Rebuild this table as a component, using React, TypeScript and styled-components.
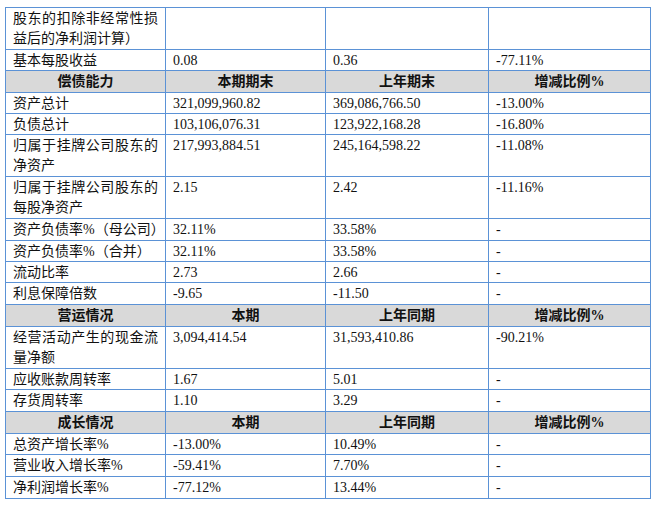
import React from "react";
import styled, { createGlobalStyle } from "styled-components";

const Global = createGlobalStyle`
  html, body { margin: 0; padding: 0; background: #ffffff; }
  body { font-family: "Liberation Serif", "Noto Sans CJK SC", serif; }
`;

const Page = styled.div`
  padding: 7px 0 0 5px;
`;

const Table = styled.div`
  width: 646px;
  border-top: 1px solid #5b92d6;
  border-left: 1px solid #5b92d6;
  box-sizing: border-box;
  font-family: "Liberation Serif", "Noto Sans CJK SC", serif;
  font-size: 14px;
  color: #111111;
`;

const Row = styled.div<{ $h: number; $head?: boolean }>`
  display: grid;
  grid-template-columns: 160px 160px 163px 162px;
  height: ${(p) => p.$h}px;
  border-bottom: 1px solid #5b92d6;
  box-sizing: border-box;
  background: ${(p) => (p.$head ? "#d9d9d9" : "transparent")};
`;

const Cell = styled.div<{ $wrap?: boolean }>`
  border-right: 1px solid #5b92d6;
  padding: 1px 7px 0 7px;
  line-height: 20px;
  overflow: hidden;
  text-align: ${(p) => (p.$wrap ? "justify" : "left")};
  white-space: ${(p) => (p.$wrap ? "normal" : "nowrap")};
  box-sizing: border-box;
`;

const HeadCell = styled.div`
  border-right: 1px solid #5b92d6;
  line-height: 20px;
  padding-top: 1px;
  text-align: center;
  font-weight: 700;
  white-space: nowrap;
  box-sizing: border-box;
`;

type Cells = [string, string, string, string];
type RowData = { h: number; head?: boolean; wrap?: boolean; cells: Cells };

const rows: RowData[] = [
  { h: 42, wrap: true, cells: ["股东的扣除非经常性损益后的净利润计算）", "", "", ""] },
  { h: 21, cells: ["基本每股收益", "0.08", "0.36", "-77.11%"] },
  { h: 22, head: true, cells: ["偿债能力", "本期期末", "上年期末", "增减比例%"] },
  { h: 21, cells: ["资产总计", "321,099,960.82", "369,086,766.50", "-13.00%"] },
  { h: 21, cells: ["负债总计", "103,106,076.31", "123,922,168.28", "-16.80%"] },
  { h: 42, wrap: true, cells: ["归属于挂牌公司股东的净资产", "217,993,884.51", "245,164,598.22", "-11.08%"] },
  { h: 42, wrap: true, cells: ["归属于挂牌公司股东的每股净资产", "2.15", "2.42", "-11.16%"] },
  { h: 22, cells: ["资产负债率%（母公司）", "32.11%", "33.58%", "-"] },
  { h: 21, cells: ["资产负债率%（合并）", "32.11%", "33.58%", "-"] },
  { h: 21, cells: ["流动比率", "2.73", "2.66", "-"] },
  { h: 22, cells: ["利息保障倍数", "-9.65", "-11.50", "-"] },
  { h: 22, head: true, cells: ["营运情况", "本期", "上年同期", "增减比例%"] },
  { h: 42, wrap: true, cells: ["经营活动产生的现金流量净额", "3,094,414.54", "31,593,410.86", "-90.21%"] },
  { h: 21, cells: ["应收账款周转率", "1.67", "5.01", "-"] },
  { h: 22, cells: ["存货周转率", "1.10", "3.29", "-"] },
  { h: 22, head: true, cells: ["成长情况", "本期", "上年同期", "增减比例%"] },
  { h: 21, cells: ["总资产增长率%", "-13.00%", "10.49%", "-"] },
  { h: 22, cells: ["营业收入增长率%", "-59.41%", "7.70%", "-"] },
  { h: 22, cells: ["净利润增长率%", "-77.12%", "13.44%", "-"] },
];

export default function App() {
  return (
    <>
      <Global />
      <Page>
        <Table>
          {rows.map((r, i) => (
            <Row key={i} $h={r.h} $head={r.head}>
              {r.cells.map((c, j) =>
                r.head ? (
                  <HeadCell key={j}>{c}</HeadCell>
                ) : (
                  <Cell key={j} $wrap={r.wrap}>
                    {c}
                  </Cell>
                )
              )}
            </Row>
          ))}
        </Table>
      </Page>
    </>
  );
}
